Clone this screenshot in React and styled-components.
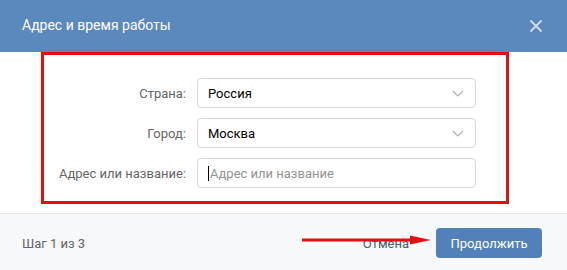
import React from "react";
import styled, { createGlobalStyle } from "styled-components";

const GlobalStyle = createGlobalStyle`
  html, body {
    margin: 0;
    padding: 0;
    background: #fff;
    font-family: Roboto, "Liberation Sans", Arial, sans-serif;
    -webkit-font-smoothing: antialiased;
  }
`;

const fields = [
  { label: "Страна:", value: "Россия", select: true },
  { label: "Город:", value: "Москва", select: true },
  { label: "Адрес или название:", placeholder: "Адрес или название" },
];

function App() {
  return (
    <>
      <GlobalStyle />
      <Modal>
        <Header>
          <Title>Адрес и время работы</Title>
          <Close>
            <svg width="12" height="12" viewBox="0 0 12 12">
              <path
                d="M1 1L11 11M11 1L1 11"
                stroke="currentColor"
                strokeWidth="1.8"
                strokeLinecap="round"
              />
            </svg>
          </Close>
        </Header>

        <Body>
          <Highlight>
            {fields.map((f, i) => (
              <Row key={i}>
                <Label>{f.label}</Label>
                <Field>
                  {f.select ? (
                    <>
                      <Value>{f.value}</Value>
                      <Chevron width="12" height="7" viewBox="0 0 12 7">
                        <path
                          d="M1 1L6 6L11 1"
                          fill="none"
                          stroke="currentColor"
                          strokeWidth="1.2"
                        />
                      </Chevron>
                    </>
                  ) : (
                    <>
                      <Caret />
                      <Placeholder>{f.placeholder}</Placeholder>
                    </>
                  )}
                </Field>
              </Row>
            ))}
          </Highlight>
        </Body>

        <Footer>
          <Step>Шаг 1 из 3</Step>
          <Actions>
            <Cancel>Отмена</Cancel>
            <Primary>Продолжить</Primary>
            <Arrow width="130" height="10" viewBox="0 0 130 10">
              <path d="M0 5H112" stroke="#e20f14" strokeWidth="3" />
              <path d="M108 0.5L129 5L108 9.5Z" fill="#e20f14" />
            </Arrow>
          </Actions>
        </Footer>
      </Modal>
    </>
  );
}

const Modal = styled.div`
  width: 567px;
  height: 270px;
  display: flex;
  flex-direction: column;
  background: #fff;
  overflow: hidden;
`;

const Header = styled.div`
  height: 52px;
  flex: none;
  background: #5b88bd;
  display: flex;
  align-items: center;
  justify-content: space-between;
  padding: 0 25px 0 22px;
`;

const Title = styled.div`
  color: #fff;
  font-size: 14px;
  padding-bottom: 2px;
`;

const Close = styled.div`
  color: #d2deec;
  display: flex;
  align-items: center;
`;

const Body = styled.div`
  flex: 1;
  padding-left: 41px;
`;

const Highlight = styled.div`
  width: 468px;
  height: 152px;
  box-sizing: border-box;
  border: 3px solid #e20f14;
  padding: 23px 0 0 0;
  display: flex;
  flex-direction: column;
  gap: 10px;
`;

const Row = styled.div`
  display: flex;
  align-items: center;
  gap: 11px;
`;

const Label = styled.div`
  width: 142px;
  text-align: right;
  color: #656565;
  font-size: 13px;
`;

const Field = styled.div`
  width: 279px;
  height: 30px;
  box-sizing: border-box;
  border: 1px solid #d3d9de;
  border-radius: 4px;
  display: flex;
  align-items: center;
  padding: 0 10px 0 10px;
  position: relative;
`;

const Value = styled.div`
  flex: 1;
  color: #000;
  font-size: 13px;
`;

const Chevron = styled.svg`
  color: #a7adb5;
  margin-right: 1px;
`;

const Caret = styled.span`
  width: 1px;
  height: 15px;
  background: #000;
  margin-right: 1px;
`;

const Placeholder = styled.span`
  color: #939393;
  font-size: 13px;
`;

const Footer = styled.div`
  height: 57px;
  flex: none;
  box-sizing: border-box;
  border-top: 1px solid #e7e8ec;
  background: #f7f8fa;
  display: flex;
  align-items: center;
  justify-content: space-between;
  padding: 2px 25px 0 22px;
`;

const Step = styled.div`
  color: #656565;
  font-size: 13px;
`;

const Actions = styled.div`
  display: flex;
  align-items: center;
  gap: 27px;
  position: relative;
`;

const Cancel = styled.div`
  color: #4a5a6e;
  font-size: 13px;
`;

const Primary = styled.div`
  width: 106px;
  height: 30px;
  box-sizing: border-box;
  border-radius: 4px;
  background: #5181b8;
  color: #fff;
  font-size: 13px;
  display: flex;
  align-items: center;
  justify-content: center;
`;

const Arrow = styled.svg`
  position: absolute;
  left: -61px;
  top: 7px;
`;

export default App;
